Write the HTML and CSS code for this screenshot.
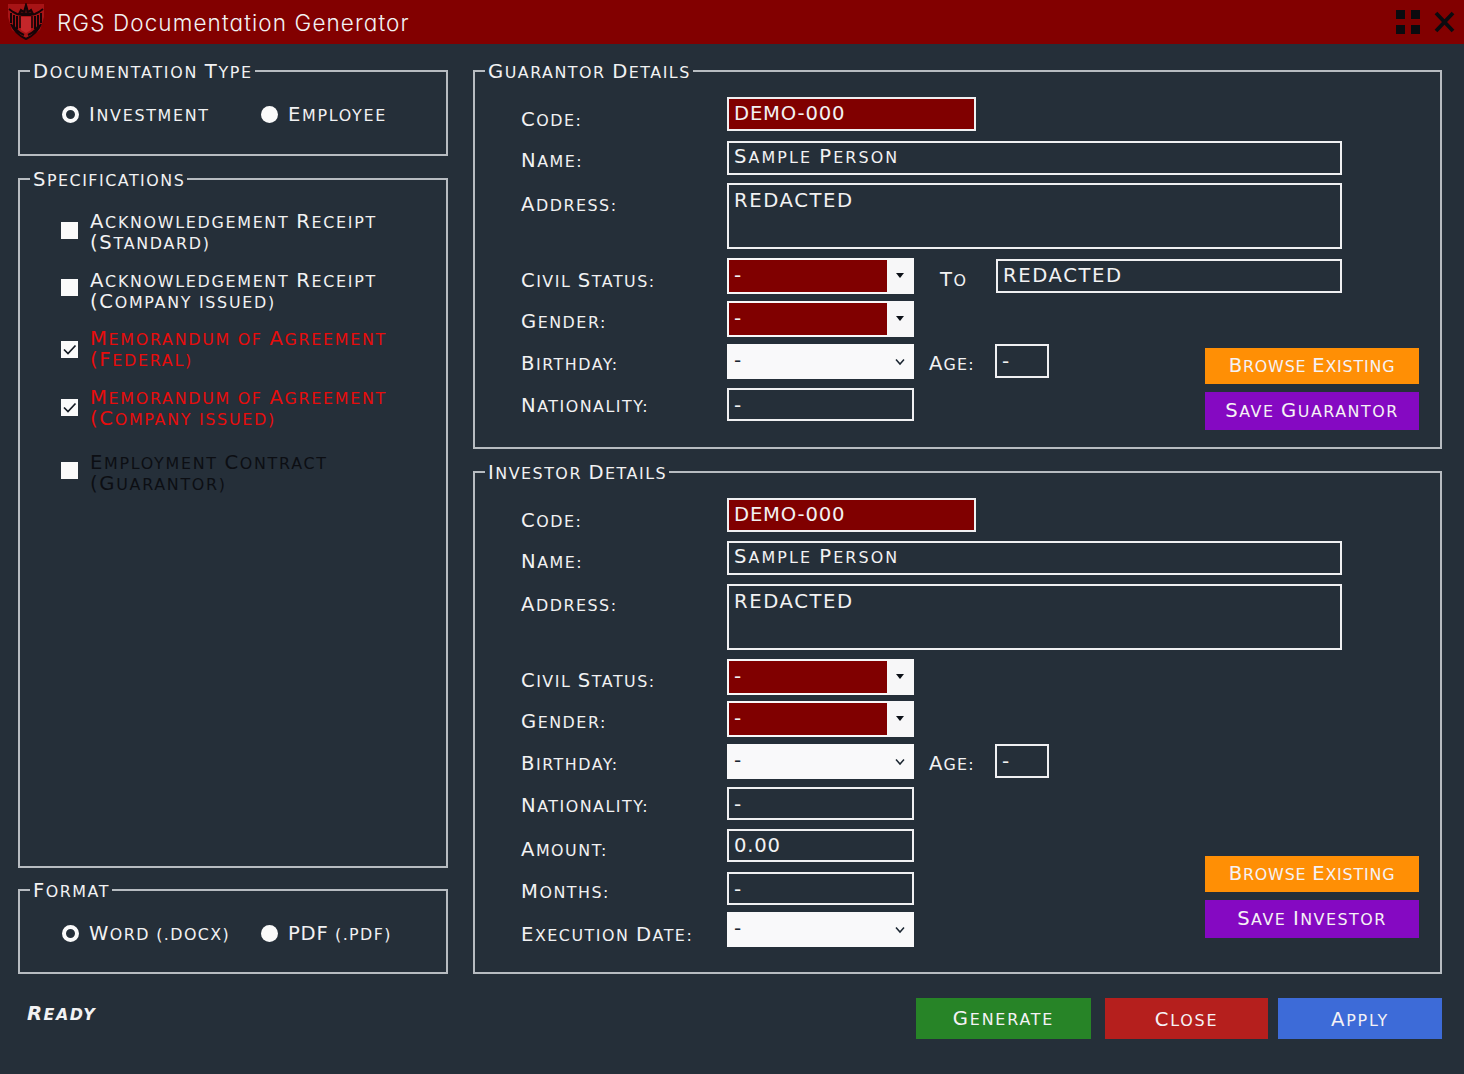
FILE: index.html
```html
<!DOCTYPE html>
<html lang="en">
<head>
<meta charset="utf-8">
<title>RGS Documentation Generator</title>
<link rel="stylesheet" href="styles.css">
</head>
<body>
<header class="titlebar">
  <svg class="crest" viewBox="0 0 36 38" width="36" height="38">
    <path d="M0 1H36V14L32 27L18 37L4 27L0 14Z" fill="#a81416"/>
    <path d="M13 14H23V27L18 30L13 27Z" fill="#c4262a"/>
    <g fill="none" stroke="#160407" stroke-width="2">
      <path d="M1 6L5 9L9 11L14 12H22L27 11L31 9L35 6"/>
      <path d="M3 10V20M33 10V20M6 12V24M30 12V24M9 13V26M27 13V26"/>
      <path d="M12 13V25M24 13V25" stroke-width="1.500"/>
      <path d="M3 21Q7 31 18 36Q29 31 33 21M5 22Q9 29 16 32M31 22Q27 29 20 32"/>
      <path d="M11 11L13 7L16 9L18 2L20 9L23 7L25 11Z" fill="#4a0a0d"/>
    </g>
  </svg>
  <h1 class="title">RGS Documentation Generator</h1>
  <svg class="winicons" viewBox="0 0 60 28" width="60" height="28">
    <path d="M1 2h9v9H1zM16 2h9v9h-9zM1 17h9v9H1zM16 17h9v9h-9z" fill="#0b0b0f"/>
    <path d="M41 5L58 23M58 5L41 23" stroke="#0b0b0f" stroke-width="3.800" fill="none"/>
  </svg>
</header>

<main class="columns">
  <div class="left">
    <fieldset class="panel panel-type">
      <legend><span class="w">Documentation</span> <span class="w">Type</span></legend>
      <div class="radios">
        <label class="radio"><span class="dot on"></span><span class="w">Investment</span></label>
        <label class="radio"><span class="dot"></span><span class="w">Employee</span></label>
      </div>
    </fieldset>

    <fieldset class="panel panel-specs">
      <legend><span class="w">Specifications</span></legend>
      <div class="specs">
        <label class="spec"><span class="box b1"></span><span><span class="w">Acknowledgement</span> <span class="w">Receipt</span><br><span class="w">(Standard)</span></span></label>
        <label class="spec"><span class="box b2"></span><span><span class="w">Acknowledgement</span> <span class="w">Receipt</span><br><span class="w">(Company</span> issued)</span></label>
        <label class="spec red"><span class="box b3"><svg viewBox="0 0 17 17" width="17" height="17"><path d="M3 8.500L7 12.500L14.500 4.500"/></svg></span><span><span class="w">Memorandum</span> of <span class="w">Agreement</span><br><span class="w">(Federal)</span></span></label>
        <label class="spec red"><span class="box b4"><svg viewBox="0 0 17 17" width="17" height="17"><path d="M3 8.500L7 12.500L14.500 4.500"/></svg></span><span><span class="w">Memorandum</span> of <span class="w">Agreement</span><br><span class="w">(Company</span> issued)</span></label>
        <label class="spec black"><span class="box b5"></span><span><span class="w">Employment</span> <span class="w">Contract</span><br><span class="w">(Guarantor)</span></span></label>
      </div>
    </fieldset>

    <fieldset class="panel panel-format">
      <legend><span class="w">Format</span></legend>
      <div class="radios">
        <label class="radio"><span class="dot on"></span><span><span class="w">Word</span> (.docx)</span></label>
        <label class="radio"><span class="dot"></span><span><span class="full">PDF</span> (.pdf)</span></label>
      </div>
    </fieldset>
  </div>

  <div class="right">
    <fieldset class="panel panel-guarantor">
      <legend><span class="w">Guarantor</span> <span class="w">Details</span></legend>
      <div class="form">
        <div class="labels">
          <span><span class="w">Code:</span></span>
          <span><span class="w">Name:</span></span>
          <span><span class="w">Address:</span></span>
          <span><span class="w">Civil</span> <span class="w">Status:</span></span>
          <span><span class="w">Gender:</span></span>
          <span><span class="w">Birthday:</span></span>
          <span><span class="w">Nationality:</span></span>
        </div>
        <div class="fields">
          <div class="input code full">DEMO-000</div>
          <div class="input wide"><span class="w">Sample</span> <span class="w">Person</span></div>
          <div class="input area full">REDACTED</div>
          <div class="line">
            <div class="combo"><span>-</span><i class="arrow"></i></div>
            <span class="side to"><span class="w">To</span></span>
            <div class="input partner full">REDACTED</div>
          </div>
          <div class="combo"><span>-</span><i class="arrow"></i></div>
          <div class="line">
            <div class="date"><span>-</span><svg viewBox="0 0 10 8" width="10" height="8"><path d="M1 1.500L5 6L9 1.500"/></svg></div>
            <span class="side age"><span class="w">Age:</span></span>
            <div class="input years dash">-</div>
          </div>
          <div class="input short dash">-</div>
        </div>
        <div class="actions">
          <button class="btn orange"><span><span class="w">Browse</span> <span class="w">Existing</span></span></button>
          <button class="btn purple"><span><span class="w">Save</span> <span class="w">Guarantor</span></span></button>
        </div>
      </div>
    </fieldset>

    <fieldset class="panel panel-investor">
      <legend><span class="w">Investor</span> <span class="w">Details</span></legend>
      <div class="form">
        <div class="labels">
          <span><span class="w">Code:</span></span>
          <span><span class="w">Name:</span></span>
          <span><span class="w">Address:</span></span>
          <span><span class="w">Civil</span> <span class="w">Status:</span></span>
          <span><span class="w">Gender:</span></span>
          <span><span class="w">Birthday:</span></span>
          <span><span class="w">Nationality:</span></span>
          <span><span class="w">Amount:</span></span>
          <span><span class="w">Months:</span></span>
          <span><span class="w">Execution</span> <span class="w">Date:</span></span>
        </div>
        <div class="fields">
          <div class="input code full">DEMO-000</div>
          <div class="input wide"><span class="w">Sample</span> <span class="w">Person</span></div>
          <div class="input area full">REDACTED</div>
          <div class="combo"><span>-</span><i class="arrow"></i></div>
          <div class="combo"><span>-</span><i class="arrow"></i></div>
          <div class="line">
            <div class="date"><span>-</span><svg viewBox="0 0 10 8" width="10" height="8"><path d="M1 1.500L5 6L9 1.500"/></svg></div>
            <span class="side age"><span class="w">Age:</span></span>
            <div class="input years dash">-</div>
          </div>
          <div class="input short dash">-</div>
          <div class="input short full">0.00</div>
          <div class="input short dash">-</div>
          <div class="date"><span>-</span><svg viewBox="0 0 10 8" width="10" height="8"><path d="M1 1.500L5 6L9 1.500"/></svg></div>
        </div>
        <div class="actions">
          <button class="btn orange"><span><span class="w">Browse</span> <span class="w">Existing</span></span></button>
          <button class="btn purple"><span><span class="w">Save</span> <span class="w">Investor</span></span></button>
        </div>
      </div>
    </fieldset>
  </div>
</main>

<footer class="footer">
  <span class="status"><span class="w">Ready</span></span>
  <button class="btn green"><span class="w">Generate</span></button>
  <button class="btn crimson"><span class="w">Close</span></button>
  <button class="btn blue"><span class="w">Apply</span></button>
</footer>
</body>
</html>
```
FILE: styles.css
```css
* { box-sizing: border-box; }

body {
  margin: 0;
  width: 1464px;
  height: 1074px;
  overflow: hidden;
  background: #252f39;
  color: #f2f2f3;
  font-family: "DejaVu Sans", sans-serif;
  font-size: 15.9px;
  line-height: 20px;
  letter-spacing: 1.5px;
  text-transform: uppercase;
  white-space: nowrap;
}

/* a word whose initial stands taller than its small capitals */
.w { display: inline-block; }
.w::first-letter { font-size: 19.6px; }
.full { font-size: 19.6px; letter-spacing: 0.8px; }

/* title bar */
.titlebar {
  display: flex;
  align-items: flex-start;
  height: 44px;
  padding: 3px 8px 0 8px;
  background: #820000;
}
.title {
  flex: 1;
  margin: 4px 0 0 13px;
  font: 300 22.5px/32px Inter, sans-serif;
  font-feature-settings: "cv11";
  letter-spacing: 1.1px;
  text-transform: none;
}
.winicons { margin: 5px 1px 0 0; }

/* panels */
.columns { display: flex; gap: 25px; padding: 16px 22px 0 18px; }
.left { width: 430px; }
.right { flex: 1; }
.panel {
  margin: 0;
  padding: 0;
  min-width: 0;
  border: 2px solid #b7bcc1;
}
legend { height: 22px; margin-left: 10px; padding: 0 2px 0 3px; line-height: 23px; }
.panel-type { height: 96px; }
.panel-type legend { letter-spacing: 1.7px; }
.panel-specs { height: 700px; margin-top: 12px; }
.panel-format { height: 95px; margin-top: 11px; }
.panel-guarantor { height: 389px; }
.panel-investor { height: 513px; margin-top: 12px; }

/* options */
.radios { display: flex; padding: 23px 0 0 42px; letter-spacing: 1.7px; }
.panel-format .radios { letter-spacing: 1.4px; }
.radio { display: flex; flex: none; align-items: flex-start; gap: 10px; width: 199px; }
.dot { width: 17px; height: 17px; margin-top: 1px; border-radius: 50%; background: #fafafa; }
.dot.on { background: transparent; border: 4px solid #fafafa; }
.specs {
  display: grid;
  grid-template-rows: 59px 58px 59px 65px 44px;
  padding: 22px 0 0 41px;
  letter-spacing: 1.7px;
}
.spec { display: flex; gap: 12px; }
.box { width: 17px; height: 17px; background: #fafafa; }
.box svg { display: block; fill: none; stroke: #141b24; stroke-width: 1.7; }
.b1 { margin-top: 10px; }
.b2 { margin-top: 8px; }
.b3 { margin-top: 12px; }
.b4 { margin-top: 11px; }
.b5 { margin-top: 9px; }
.red { color: #e80c0c; }
.black { color: #0c0e13; }

/* detail forms */
.form { display: flex; height: 365px; }
.panel-investor .form { height: 489px; }
.labels { display: grid; width: 206px; margin-left: 46px; padding-top: 28px; align-content: start; }
.panel-guarantor .labels { grid-template-rows: 41px 44px 76px 41px 42px 42px 22px; }
.panel-investor .labels { grid-template-rows: 41px 43px 76px 41px 42px 42px 44px 42px 43px 22px; }
.fields { display: grid; width: 615px; padding-top: 15px; align-content: start; align-items: start; }
.panel-guarantor .fields { grid-template-rows: 44px 42px 75px 43px 43px 44px 32px; }
.panel-investor .fields { grid-template-rows: 43px 43px 75px 42px 43px 43px 42px 43px 40px 35px; }
.line { display: flex; align-items: flex-start; }
.input { height: 34px; padding: 5px 5px; border: 2px solid #f0f0f2; }
.wide { padding-top: 4px; letter-spacing: 2.1px; }
.code { width: 249px; background: #800000; }
.area { height: 66px; padding-top: 6px; }
.area, .partner { letter-spacing: 1.6px; }
.short, .combo, .date { width: 187px; }
.partner { width: 346px; margin-top: 1px; }
.years { width: 54px; }
.short { height: 33px; }
.dash { font-size: 20px; }
.combo, .date { display: flex; justify-content: space-between; height: 35px; font-size: 20px; }
.combo { height: 36px; padding-left: 5px; border: 2px solid #f7f7f8; background: #800000; }
.combo > span, .date > span { line-height: 30px; }
.arrow { display: flex; width: 25px; background: #f7f7f8; }
.arrow::before {
  content: "";
  margin: 13px 0 0 9px;
  height: 0;
  border: 4.5px solid transparent;
  border-top: 5.5px solid #0c1118;
  border-bottom: 0;
}
.date { padding: 1px 9px 0 7px; background: #f9f9fa; color: #1b2631; }
.date svg { margin-top: 13px; fill: none; stroke: #1b2631; stroke-width: 1.5; }
.side { width: 82px; padding-top: 12px; }
.to { padding-left: 26px; }
.age { width: 81px; padding: 10px 0 0 15px; letter-spacing: 1.2px; }

/* buttons */
.btn {
  border: 0;
  padding: 1px 0 0;
  color: #f5f2f5;
  font: inherit;
  letter-spacing: inherit;
  text-transform: inherit;
}
.actions { display: flex; flex-direction: column; justify-content: flex-end; gap: 8px; width: 214px; margin-left: -137px; padding-bottom: 17px; }
.panel-investor .actions { padding-bottom: 34px; }
.actions .btn { height: 36px; }
.actions .purple { height: 38px; }
.actions .orange { letter-spacing: 0.8px; }
.orange { background: #ff8f05; }
.purple { background: #8509c2; }
.green { width: 175px; margin-right: 14px; background: #278427; }
.crimson { width: 163px; margin-right: 10px; background: #b51f1d; }
.blue { width: 164px; background: #3d6bd8; }

.footer { display: flex; padding: 24px 22px 0 27px; }
.footer .btn { height: 41px; letter-spacing: 1.8px; }
.footer .crimson, .footer .blue { padding-top: 4px; }
.status { flex: 1; padding-top: 6px; font-weight: bold; font-style: italic; }
```
